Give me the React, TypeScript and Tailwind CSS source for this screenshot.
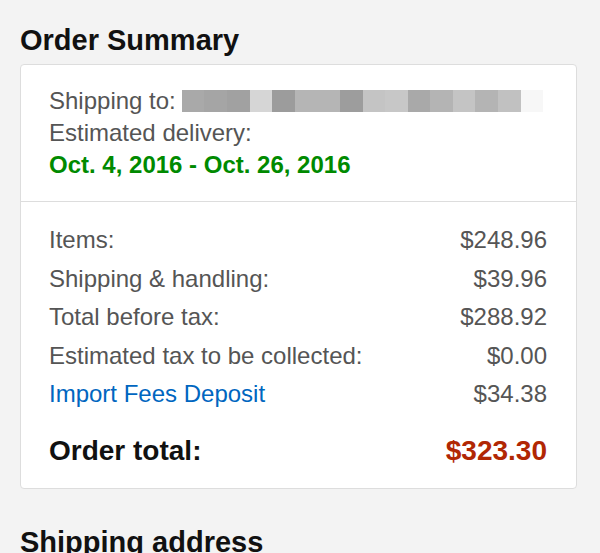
const blur = [
  'bg-[#a9a9a9]',
  'bg-[#a5a5a5]',
  'bg-[#a1a1a1]',
  'bg-[#d6d6d6]',
  'bg-[#9c9c9c]',
  'bg-[#b5b5b5]',
  'bg-[#b5b5b5]',
  'bg-[#9d9d9d]',
  'bg-[#c4c4c4]',
  'bg-[#c7c7c7]',
  'bg-[#a9a9a9]',
  'bg-[#b4b4b4]',
  'bg-[#c4c4c4]',
  'bg-[#b4b4b4]',
  'bg-[#c1c1c1]',
  'bg-[#f7f7f7]',
];

const rows = [
  { label: 'Items:', value: '$248.96' },
  { label: 'Shipping & handling:', value: '$39.96' },
  { label: 'Total before tax:', value: '$288.92' },
  { label: 'Estimated tax to be collected:', value: '$0.00' },
];

export default function App() {
  return (
    <div className="w-[600px] h-[553px] overflow-hidden bg-[#f3f3f3] pl-[20px] pr-[23px] pt-[24px] font-['Liberation_Sans',Arial,sans-serif]">
      <h2 className="text-[29px] leading-[32px] font-bold text-[#111]">Order Summary</h2>

      <div className="mt-[8px] bg-white border border-[#dddddd] rounded-[4px]">
        {/* Shipping info */}
        <div className="pl-[28px] pr-[28px] pt-[20px] pb-[20px] text-[24px] leading-[32px] text-[#555]">
          <div className="flex items-center">
            <span>Shipping to:</span>
            <div className="ml-[6px] flex h-[22px]">
              {blur.map((c, i) => (
                <div key={i} className={`w-[22.6px] h-full ${c}`} />
              ))}
            </div>
          </div>
          <div>Estimated delivery:</div>
          <div className="font-bold text-[#008a00]">Oct. 4, 2016 - Oct. 26, 2016</div>
        </div>

        {/* Totals */}
        <div className="border-t border-[#dddddd] pl-[28px] pr-[29px] pt-[19px] pb-[18px] text-[24px] text-[#555]">
          {rows.map((r) => (
            <div key={r.label} className="flex justify-between leading-[38.5px]">
              <span>{r.label}</span>
              <span>{r.value}</span>
            </div>
          ))}
          <div className="flex justify-between leading-[38.5px]">
            <span className="text-[#0066c0]">Import Fees Deposit</span>
            <span>$34.38</span>
          </div>
          <div className="mt-[18px] flex justify-between leading-[38px] text-[28px] font-bold">
            <span className="text-[#111]">Order total:</span>
            <span className="text-[#b12704]">$323.30</span>
          </div>
        </div>
      </div>

      <h2 className="mt-[37px] text-[29px] leading-[32px] font-bold text-[#111]">Shipping address</h2>
    </div>
  );
}
